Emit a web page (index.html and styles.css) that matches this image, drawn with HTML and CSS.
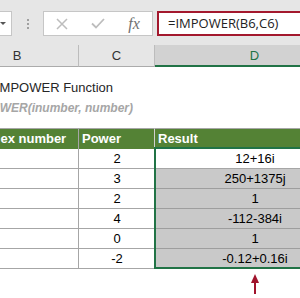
FILE: index.html
```html
<!DOCTYPE html>
<html>
<head>
<meta charset="utf-8">
<link rel="stylesheet" href="styles.css">
</head>
<body>
<div class="bar">
  <div class="namebox"><span class="caret"></span></div>
  <div class="grip"><i></i><i></i><i></i></div>
  <div class="fxbox">
    <span class="tool"><svg width="12" height="12" viewBox="0 0 12 12"><path d="M1 1 L11 11 M11 1 L1 11" stroke="#bdbdbd" stroke-width="1.5" fill="none"/></svg></span>
    <span class="tool"><svg width="14" height="11" viewBox="0 0 14 11"><path d="M1 5.5 L5 9.5 L13 1" stroke="#bdbdbd" stroke-width="1.8" fill="none"/></svg></span>
    <span class="tool fx">fx</span>
  </div>
  <div class="formula">=IMPOWER(B6,C6)</div>
</div>
<div class="sheet">
  <div class="ch">B</div>
  <div class="ch">C</div>
  <div class="ch sel">D</div>

  <div class="gap"></div>
  <div class="title">IMPOWER Function</div>
  <div class="syntax">IMPOWER(inumber, number)</div>
  <div class="gap"></div>

  <div class="th b">Complex number</div>
  <div class="th c">Power</div>
  <div class="th d">Result</div>

  <div class="td b"></div><div class="td c">2</div><div class="td d active">12+16i</div>
  <div class="td b"></div><div class="td c">3</div><div class="td d">250+1375j</div>
  <div class="td b"></div><div class="td c">2</div><div class="td d">1</div>
  <div class="td b"></div><div class="td c">4</div><div class="td d">-112-384i</div>
  <div class="td b"></div><div class="td c">0</div><div class="td d">1</div>
  <div class="td b"></div><div class="td c">-2</div><div class="td d">-0.12+0.16i</div>

  <div class="arrow"><svg width="10" height="20" viewBox="0 0 10 20"><polygon points="5,0 1,9 9,9" fill="#a0142c"/><rect x="4" y="8" width="2" height="12" fill="#a0142c"/></svg></div>

  <div class="selection"></div>
</div>
</body>
</html>
```

FILE: styles.css
```css
* { box-sizing: border-box; }
body {
  margin: 0;
  width: 300px;
  height: 298px;
  overflow: hidden;
  background: #fff;
  font-family: "Liberation Sans", Arial, sans-serif;
}
.bar {
  height: 45px;
  background: #e6e6e6;
  display: flex;
  align-items: flex-start;
  padding-top: 11px;
}
.namebox {
  flex: none;
  width: 62px;
  margin-left: -50px;
  height: 25px;
  background: #fff;
  border: 1px solid #c6c6c6;
  display: flex;
  align-items: center;
  justify-content: flex-end;
  padding-right: 5px;
}
.caret {
  width: 0;
  height: 0;
  border-left: 3px solid transparent;
  border-right: 3px solid transparent;
  border-top: 3px solid #555;
}
.grip {
  flex: none;
  margin-left: 15px;
  margin-top: 8px;
  display: flex;
  flex-direction: column;
  gap: 2px;
}
.grip i {
  display: block;
  width: 2px;
  height: 2px;
  background: #a0a0a0;
}
.fxbox {
  flex: none;
  margin-left: 14px;
  width: 110px;
  height: 25px;
  border: 1px solid #c6c6c6;
  background: #fff;
  display: flex;
}
.tool {
  width: 36px;
  display: flex;
  align-items: center;
  justify-content: center;
}
.fx {
  font-family: "Liberation Serif", serif;
  font-style: italic;
  font-size: 16px;
  color: #707070;
}
.formula {
  flex: none;
  margin-left: 4px;
  width: 200px;
  height: 25px;
  border: 2px solid #a3182d;
  background: #fff;
  padding-left: 9px;
  font-family: "Open Sans", sans-serif;
  font-size: 13px;
  line-height: 21px;
  color: #222;
  white-space: nowrap;
}
.sheet {
  position: relative;
  display: grid;
  grid-template-columns: 123px 76px 200px;
  grid-template-rows: 22px 11px 20px 19px 11px 21px repeat(6, 20px) 29px;
  margin-left: -44px;
  width: 399px;
  font-size: 13px;
}
.ch {
  background: #e6e6e6;
  border-bottom: 1px solid #ababab;
  border-right: 1px solid #bcbcbc;
  text-align: center;
  line-height: 20px;
  padding-top: 1px;
  color: #333;
}
.ch.sel {
  background: #d2d2d2;
  color: #217346;
  border-bottom: 2px solid #217346;
}
.gap { grid-column: 1 / -1; }
.title {
  grid-column: 1 / -1;
  padding: 1px 0 0 40px;
  line-height: 18px;
  white-space: nowrap;
  color: #262626;
}
.syntax {
  grid-column: 1 / -1;
  padding: 1px 0 0 13px;
  line-height: 18px;
  font-size: 12px;
  font-weight: bold;
  font-style: italic;
  color: #a6a6a6;
  white-space: nowrap;
}
.th {
  background: #548235;
  color: #fff;
  font-weight: bold;
  border-top: 1px solid #a6a6a6;
  padding: 1px 0 0 3px;
  line-height: 18px;
  white-space: nowrap;
}
.th.b { padding-left: 4px; border-right: 1px solid #a6a6a6; }
.th.c { border-right: 1px solid #d0d0d0; }
.td {
  border-bottom: 1px solid #a6a6a6;
  line-height: 18px;
  padding-top: 1px;
  text-align: center;
  color: #000;
}
.td.b { border-right: 1px solid #a6a6a6; }
.td.d {
  background: #c9c9c9;
  border-bottom-color: #9e9e9e;
}
.td.d.active {
  background: #fff;
  border-bottom-color: #a6a6a6;
}
.arrow {
  grid-column: 3;
  grid-row: 13;
  display: flex;
  justify-content: center;
  padding-top: 5px;
}
.selection {
  position: absolute;
  grid-column: 3;
  grid-row: 7 / 13;
  top: -2px;
  left: -1px;
  right: 0;
  bottom: 0;
  border: 2px solid #217346;
  pointer-events: none;
}
```
